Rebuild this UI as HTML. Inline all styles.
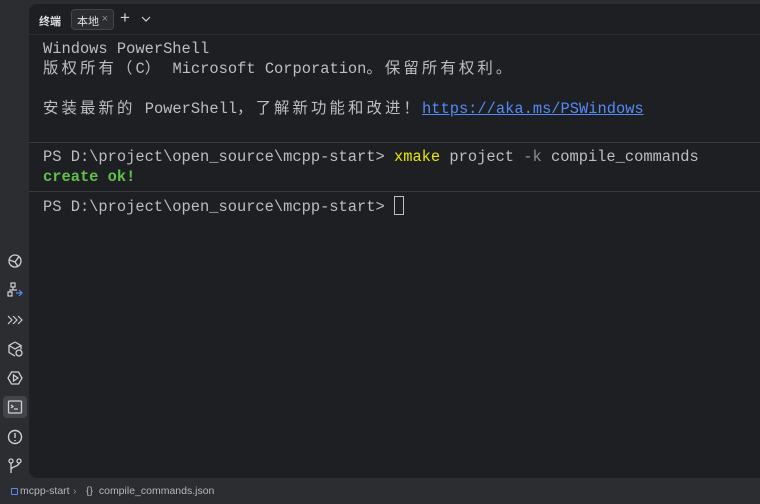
<!DOCTYPE html>
<html><head><meta charset="utf-8"><style>
*{margin:0;padding:0;box-sizing:border-box}
body{width:760px;height:504px;background:#2b2d30;position:relative;overflow:hidden;font-family:"Liberation Sans","Noto Sans CJK SC",sans-serif}
.panel{position:absolute;left:29px;top:4px;width:740px;height:474px;background:#1e1f22;border-radius:8px}
.hdr{position:absolute;left:0;top:0;right:0;height:31px;border-bottom:1px solid #2b2d30}
.t{position:absolute;top:9px;font-size:11px;color:#dfe1e5;font-weight:bold}
.tab{position:absolute;left:42px;top:5px;width:43px;height:21px;border:1px solid #43454a;background:#2b2d30;border-radius:4px;font-size:11px;color:#dfe1e5;padding:3px 0 0 5px}
.tab span{color:#8c8f94;position:absolute;right:5px;top:3px}
.term{position:absolute;left:14px;font-family:"Liberation Mono","Noto Sans CJK SC",monospace;font-size:15.4px;color:#bcbec4;white-space:pre;line-height:20px;height:20px}
.c{letter-spacing:3.1px;font-family:"Noto Sans CJK SC",monospace;line-height:1}
.sep{position:absolute;left:0;right:0;height:1px;background:#393b40}
.ic{position:absolute;left:6px;width:18px;height:18px}
.bot{position:absolute;top:485px;font-size:10.5px;color:#b4b8bf}
</style></head><body>
<div class="panel">
<div class="hdr">
<div class="t" style="left:10px">终端</div>
<div class="tab">本地<span>×</span></div>
<div style="position:absolute;left:91px;top:4px;color:#ced0d6;font-size:17px">+</div>
<svg style="position:absolute;left:112px;top:12px" width="10" height="6"><path d="M1 1l4 4 4-4" stroke="#ced0d6" fill="none" stroke-width="1.2"/></svg>
</div>
<div class="term" style="top:35px">Windows PowerShell</div>
<div class="term" style="top:55px"><span class="c">版权所有（</span>C<span class="c">）</span> Microsoft Corporation<span class="c">。保留所有权利。</span></div>
<div class="term" style="top:95px"><span class="c">安装最新的</span> PowerShell<span class="c">，了解新功能和改进！</span><span style="color:#548af7;text-decoration:underline">https://aka.ms/PSWindows</span></div>
<div class="sep" style="top:138px"></div>
<div class="term" style="top:143px">PS D:\project\open_source\mcpp-start&gt; <span style="color:#e6e600">xmake</span> project <span style="color:#8c8f94">-k</span> compile_commands</div>
<div class="term" style="top:163px"><span style="color:#5fc04a;font-weight:bold">create ok!</span></div>
<div class="sep" style="top:187px"></div>
<div class="term" style="top:192px">PS D:\project\open_source\mcpp-start&gt; <span style="display:inline-block;width:10px;height:19px;border:1px solid #bcbec4;vertical-align:-4px"></span></div>
</div>
<svg class="ic" style="top:252px" viewBox="0 0 18 18" fill="none" stroke="#ced0d6" stroke-width="1.3"><circle cx="9" cy="9" r="6"/><path d="M3.5 8l5.5 2 4-5.5M9 10l3 4.5"/></svg>
<svg class="ic" style="top:281px" viewBox="0 0 18 18" fill="none" stroke="#ced0d6" stroke-width="1.2"><rect x="5" y="2" width="4" height="4"/><rect x="2" y="11" width="4" height="4"/><path d="M7 6v3H4v2M7 9h4" /><path d="M10 12h6M13 9l3 3-3 3" stroke="#548af7"/></svg>
<svg class="ic" style="top:311px" viewBox="0 0 18 18" fill="none" stroke="#ced0d6" stroke-width="1.2"><path d="M2 5l4 4-4 4M7 5l4 4-4 4M12 5l4 4-4 4"/></svg>
<svg class="ic" style="top:340px" viewBox="0 0 18 18" fill="none" stroke="#ced0d6" stroke-width="1.3"><path d="M9 2l6 3.5v4M9 2L3 5.5v7L9 16M3 5.5l6 3.5 6-3.5"/><circle cx="13" cy="13" r="3"/></svg>
<svg class="ic" style="top:369px" viewBox="0 0 18 18" fill="none" stroke="#ced0d6" stroke-width="1.3"><path d="M5.5 3h7l3.5 6-3.5 6h-7L2 9z"/><path d="M7.5 6v6l4.5-3z"/></svg>
<div style="position:absolute;left:3px;top:396px;width:24px;height:22px;background:#43454a;border-radius:4px"></div>
<svg class="ic" style="top:398px" viewBox="0 0 18 18" fill="none" stroke="#ced0d6" stroke-width="1.3"><rect x="2.5" y="3" width="13" height="12" rx="1"/><path d="M5 7l2 1.5L5 10M8 11h4"/></svg>
<svg class="ic" style="top:428px" viewBox="0 0 18 18" fill="none" stroke="#ced0d6" stroke-width="1.4"><circle cx="9" cy="9" r="6.5"/><path d="M9 5v5M9 12v1.2"/></svg>
<svg class="ic" style="top:457px" viewBox="0 0 18 18" fill="none" stroke="#ced0d6" stroke-width="1.3"><circle cx="5" cy="4" r="2"/><circle cx="13" cy="4" r="2"/><path d="M5 6v10M13 6c0 4-8 3-8 7"/></svg>
<div style="position:absolute;left:11px;top:488px;width:7px;height:7px;border:1.5px solid #548af7;border-radius:1px"></div>
<div class="bot" style="left:20px">mcpp-start</div>
<div class="bot" style="left:73px;color:#8c8f94">›</div>
<div class="bot" style="left:86px">{} &nbsp;compile_commands.json</div>
</body></html>
